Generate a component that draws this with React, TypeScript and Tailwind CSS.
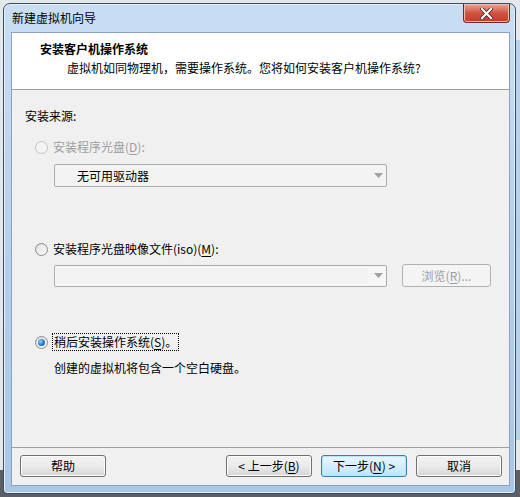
import type { ReactNode } from 'react';

const font = { fontFamily: '"Noto Sans CJK SC", "Microsoft YaHei", sans-serif' };

// 单选按钮
function Radio({ checked = false, disabled = false }: { checked?: boolean; disabled?: boolean }) {
  return (
    <span
      className={`flex h-[13px] w-[13px] shrink-0 items-center justify-center rounded-full border ${
        disabled ? 'border-[#c4c4c4] bg-[#f4f4f4]' : 'border-[#8a8a8a] bg-gradient-to-br from-[#dcdcdc] to-[#ffffff]'
      }`}
    >
      {checked && (
        <span className="h-[7px] w-[7px] rounded-full bg-[radial-gradient(circle_at_35%_35%,#8fd3ff,#1f73c4_60%,#0f4c8a)]" />
      )}
    </span>
  );
}

function Key({ k }: { k: string }) {
  return <span className="underline underline-offset-2">{k}</span>;
}

function Arrow({ color = '#a0a0a0' }: { color?: string }) {
  return (
    <svg width="9" height="5" viewBox="0 0 9 5">
      <path d="M0 0 H9 L4.5 5 Z" fill={color} />
    </svg>
  );
}

function Button({ children, focused = false }: { children: ReactNode; focused?: boolean }) {
  return (
    <div
      className={`flex h-[22px] w-[86px] items-center justify-center rounded-[3px] border text-[12px] text-black ${
        focused
          ? 'border-[#3c7fb1] bg-gradient-to-b from-[#eaf6fd] to-[#bee6fd] shadow-[inset_0_0_0_1px_#b9e4fc]'
          : 'border-[#707070] bg-gradient-to-b from-[#f2f2f2] via-[#ebebeb] to-[#d6d6d6] shadow-[inset_0_0_0_1px_#fcfcfc]'
      }`}
    >
      {children}
    </div>
  );
}

export default function App() {
  return (
    <div className="relative h-[497px] w-[520px] overflow-hidden bg-[#5b6068]" style={font}>
      {/* 背后的窗口 */}
      <div className="absolute left-0 top-0 h-[470px] w-[520px] bg-[#e4e7eb]" />
      <div className="absolute right-0 top-[40px] h-[400px] w-[6px] bg-[#b8d2ee]" />

      {/* 主窗口 */}
      <div className="relative ml-[3px] mt-[3px] flex h-[491px] w-[513px] flex-col rounded-t-[7px] rounded-b-[4px] border border-[#3d4c60] bg-gradient-to-b from-[#c9def4] via-[#b5d0ec] to-[#a8c6e8] shadow-[inset_0_0_0_1px_#e6f0fb]">
        {/* 标题栏 */}
        <div className="relative flex h-[28px] shrink-0 items-center pl-[8px] text-[12px] text-black">
          新建虚拟机向导
          <div className="absolute right-[5px] top-0 flex h-[19px] w-[47px] items-center justify-center rounded-b-[4px] border border-t-0 border-[#6b2a22] bg-gradient-to-b from-[#e9a597] via-[#d0533f] to-[#c23a27] shadow-[inset_0_0_0_1px_#eebcae]">
            <svg width="13" height="11" viewBox="0 0 13 11">
              <path d="M2 1 L11 10 M11 1 L2 10" stroke="#3a1a16" strokeWidth="3.6" strokeLinecap="square" />
              <path d="M2 1 L11 10 M11 1 L2 10" stroke="#ffffff" strokeWidth="2.2" strokeLinecap="square" />
            </svg>
          </div>
        </div>

        {/* 客户区 */}
        <div className="ml-[7px] mr-[5px] flex h-[454px] flex-col border border-[#8ca3bf] bg-[#f0f0f0] text-[12px] leading-[16px] text-black">
          {/* 头部 */}
          <div className="h-[57px] shrink-0 border-b border-[#a0a0a0] bg-white pl-[28px] pt-[8px]">
            <div className="font-bold">安装客户机操作系统</div>
            <div className="mt-[3px] pl-[27px]">虚拟机如同物理机，需要操作系统。您将如何安装客户机操作系统?</div>
          </div>

          {/* 内容 */}
          <div className="flex flex-1 flex-col pl-[13px] pr-[18px]">
            <div className="mt-[18px]">安装来源:</div>

            <div className="mt-[15px] flex items-center gap-[5px] pl-[10px] text-[#9d9d9d]">
              <Radio disabled />
              <span>
                安装程序光盘(<Key k="D" />):
              </span>
            </div>

            <div className="ml-[29px] mt-[9px] flex h-[23px] w-[333px] items-center justify-between rounded-[2px] border border-[#acacac] bg-[#f3f3f3] pl-[22px] pr-[3px]">
              <span>无可用驱动器</span>
              <Arrow />
            </div>

            <div className="mt-[54px] flex items-center gap-[5px] pl-[10px]">
              <Radio />
              <span>
                安装程序光盘映像文件(iso)(<Key k="M" />):
              </span>
            </div>

            <div className="ml-[29px] mt-[7px] flex items-center">
              <div className="flex h-[22px] w-[333px] items-center justify-between rounded-[2px] border border-[#acacac] bg-[#f6f6f6] pl-px pr-[3px]">
                <div className="h-[17px] w-[312px] bg-[#f3f3f3]" />
                <Arrow />
              </div>
              <div className="ml-[15px] flex h-[23px] w-[89px] items-center justify-center rounded-[3px] border border-[#adb2b5] bg-[#f4f4f4] text-[#9d9d9d]">
                浏览(<Key k="R" />)...
              </div>
            </div>

            <div className="mt-[46px] flex items-center gap-[4px] pl-[10px]">
              <Radio checked />
              <span className="border border-dotted border-black px-px">
                稍后安装操作系统(<Key k="S" />)。
              </span>
            </div>

            <div className="ml-[29px] mt-[9px]">创建的虚拟机将包含一个空白硬盘。</div>
          </div>

          {/* 底部按钮 */}
          <div className="flex h-[38px] shrink-0 items-center border-t border-[#a0a0a0] pb-[1px] pl-[8px]">
            <Button>帮助</Button>
            <div className="ml-[120px]">
              <Button>
                &lt; 上一步(<Key k="B" />)
              </Button>
            </div>
            <div className="ml-[9px]">
              <Button focused>
                下一步(<Key k="N" />) &gt;
              </Button>
            </div>
            <div className="ml-[9px]">
              <Button>取消</Button>
            </div>
          </div>
        </div>
      </div>
    </div>
  );
}
